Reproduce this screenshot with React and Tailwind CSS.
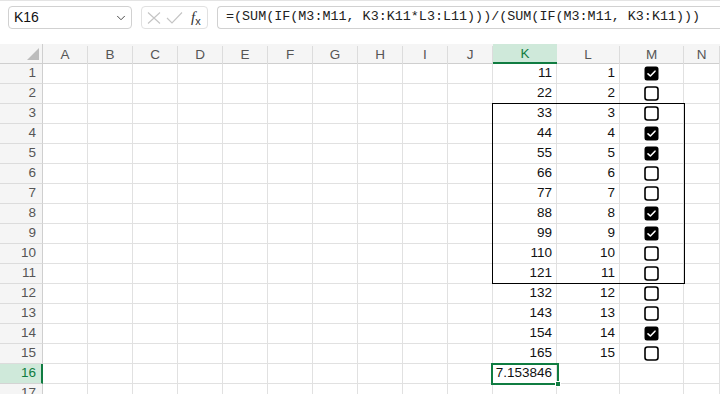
import { ChevronDown } from 'lucide-react';

const cols = ['A', 'B', 'C', 'D', 'E', 'F', 'G', 'H', 'I', 'J', 'K', 'L', 'M', 'N'];
const checked = [1, 4, 5, 8, 9, 14];

// one row of sheet data: K = 11*n, L = n, M = checkbox
const rows = Array.from({ length: 17 }, (_, i) => {
  const n = i + 1;
  if (n <= 15) return { n, k: String(11 * n), l: String(n), box: checked.includes(n) ? 'on' : 'off' };
  if (n === 16) return { n, k: '7.153846', l: '', box: null };
  return { n, k: '', l: '', box: null };
});

function Box({ on }) {
  return on ? (
    <svg width="15" height="15" viewBox="0 0 15 15">
      <rect x="0.5" y="0.5" width="14" height="14" rx="2.5" fill="#000" />
      <path d="M4 7.8 L6.4 10 L11 5.2" stroke="#fff" strokeWidth="1.6" fill="none" strokeLinecap="round" strokeLinejoin="round" />
    </svg>
  ) : (
    <svg width="15" height="15" viewBox="0 0 15 15">
      <rect x="1" y="1" width="13" height="13" rx="2.5" fill="#fff" stroke="#000" strokeWidth="1.6" />
    </svg>
  );
}

export default function App() {
  return (
    <div className="w-[720px] h-[394px] overflow-hidden bg-white font-['Liberation_Sans',Arial,sans-serif] text-[13.5px] text-[#111]">
      {/* toolbar */}
      <div className="h-[44px] flex items-start pt-[5px] pl-[8px] gap-[9px] border-t border-[#e4e4e4]">
        <div className="w-[124px] h-[23px] border border-[#d1d1d1] rounded-[4px] flex items-center justify-between pl-[5px] pr-[3px] text-[14px]">
          <span>K16</span>
          <ChevronDown size={14} strokeWidth={1.5} color="#333" />
        </div>
        <div className="w-[67px] h-[23px] border border-[#e1e1e1] rounded-[4px] flex items-center pl-[5px]">
          <svg width="14" height="12" viewBox="0 0 14 12">
            <path d="M1 0.5 L13 11.5 M13 0.5 L1 11.5" stroke="#c4c4c4" strokeWidth="1.1" fill="none" />
          </svg>
          <svg width="17" height="12" viewBox="0 0 17 12" className="ml-[5px]">
            <path d="M1 6 L6 11 L16 0.5" stroke="#c4c4c4" strokeWidth="1.1" fill="none" />
          </svg>
          <span className="font-['Liberation_Serif',serif] italic text-[15px] text-[#333] ml-[8px] leading-none">
            f<span className="not-italic font-['Liberation_Sans',sans-serif] text-[11px] relative top-[3px]">x</span>
          </span>
        </div>
        <div className="flex-1 h-[23px] border border-[#d1d1d1] border-r-0 rounded-l-[4px] flex items-center pl-[8px] font-['Liberation_Mono',monospace] text-[13.4px] text-[#222] whitespace-nowrap">
          =(SUM(IF(M3:M11, K3:K11*L3:L11)))/(SUM(IF(M3:M11, K3:K11)))
        </div>
      </div>

      {/* sheet */}
      <div className="relative grid grid-cols-[43px_repeat(10,45px)_64px_63px_64px_1fr] auto-rows-[20px]">
        {/* header row */}
        <div className="bg-[#f5f5f5] border-b border-r border-[#cfcfcf] flex items-end justify-end pr-[3px] pb-[3px]">
          <svg width="12" height="12" viewBox="0 0 12 12">
            <path d="M12 0 L12 12 L0 12 Z" fill="#bdbdbd" />
          </svg>
        </div>
        {cols.map((c) =>
          c === 'K' ? (
            <div key={c} className="bg-[#cfe9da] border-b-2 border-[#107c41] text-[#107c41] flex items-center justify-center pt-[2px]">
              {c}
            </div>
          ) : (
            <div key={c} className="bg-[#f5f5f5] border-b border-[#cfcfcf] text-[#555] flex items-center justify-center">
              <span className="w-full text-center border-r border-[#dcdcdc] leading-[18px] mt-[2px]">{c}</span>
            </div>
          )
        )}

        {rows.map((r) => (
          <div key={r.n} className="contents">
            {r.n === 16 ? (
              <div className="bg-[#cfe9da] border-b border-[#d4d4d4] border-r-2 border-r-[#107c41] text-[#107c41] flex items-center justify-end pr-[5px]">
                {r.n}
              </div>
            ) : (
              <div className="bg-[#f5f5f5] border-b border-[#dcdcdc] border-r border-r-[#cfcfcf] text-[#555] flex items-center justify-end pr-[6px]">
                {r.n}
              </div>
            )}
            {cols.map((c) => (
              <div key={c} className="border-r border-b border-[#e1e1e1] flex items-center justify-end pr-[4px]">
                {c === 'K' && r.k}
                {c === 'L' && r.l}
                {c === 'M' && r.box && (
                  <div className="w-full flex justify-center pl-[4px]">
                    <Box on={r.box === 'on'} />
                  </div>
                )}
              </div>
            ))}
          </div>
        ))}

        {/* outline around K3:M11 */}
        <div className="absolute left-[492px] top-[59px] w-[193px] h-[181px] border border-black pointer-events-none" />
        {/* active cell K16 */}
        <div className="absolute left-[491px] top-[319px] w-[68px] h-[22px] border-2 border-[#107c41] pointer-events-none" />
        <div className="absolute left-[555px] top-[337px] w-[6px] h-[6px] bg-[#107c41] border border-white pointer-events-none" />
      </div>
    </div>
  );
}
